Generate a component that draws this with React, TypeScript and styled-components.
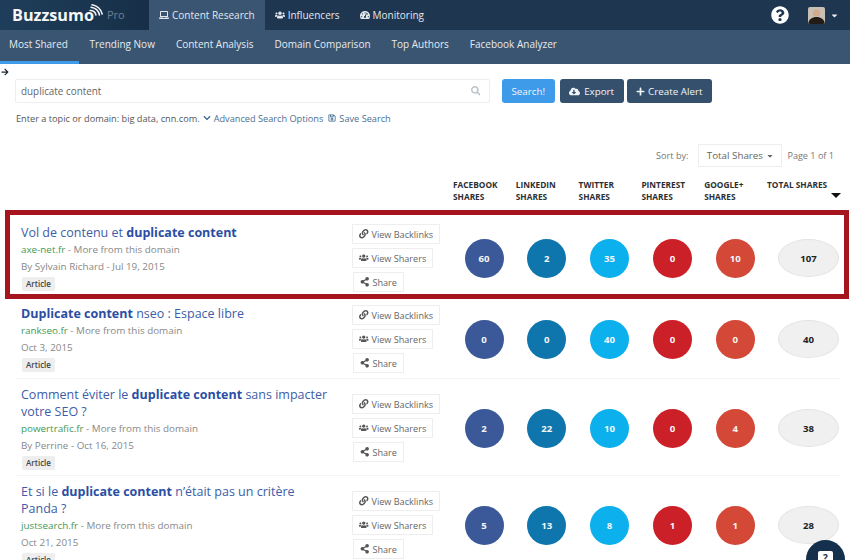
import React from "react";
import styled, { createGlobalStyle } from "styled-components";
import {
  FaLaptop, FaUsers, FaTachometerAlt, FaSearch, FaCloudDownloadAlt, FaPlus,
  FaChevronDown, FaRegSave, FaLink, FaShareAlt, FaCaretDown, FaArrowRight, FaQuestionCircle,
} from "react-icons/fa";

const Global = createGlobalStyle`
  html, body { margin: 0; padding: 0; background: #fff; }
  body { font-family: "Open Sans", "Liberation Sans", sans-serif; }
  * { box-sizing: border-box; }
`;

const Page = styled.div`
  position: relative;
  width: 850px;
  height: 560px;
  overflow: hidden;
  background: #fff;
`;

const TopBar = styled.header`
  display: flex;
  height: 30px;
  background: #1e3650;
  color: #fff;
`;
const LogoArea = styled.div`
  display: flex;
  align-items: center;
  width: 149px;
  padding-left: 12px;
  background: linear-gradient(90deg, #1f3e5b, #172f47);
`;
const LogoText = styled.span`
  font-size: 16.2px;
  font-weight: 700;
  color: #f6f7f8;
`;
const LogoMark = styled.svg`
  width: 14px;
  height: 16px;
  margin: -7px 0 0 -5px;
`;
const ProLabel = styled.span`
  margin-left: 4px;
  margin-top: -2px;
  font-size: 11px;
  color: #6f7f8f;
`;
const TopLink = styled.a<{ $active?: boolean }>`
  display: flex;
  align-items: center;
  gap: 3px;
  height: 30px;
  padding: 0 10px;
  font-size: 10px;
  color: #e3e8ed;
  background: ${(p) => (p.$active ? "#3a5572" : "transparent")};
  svg { font-size: 10px; }
`;
const TopRight = styled.div`
  display: flex;
  align-items: center;
  margin-left: auto;
  padding-right: 11px;
`;
const HelpIcon = styled(FaQuestionCircle)`
  font-size: 18px;
  color: #fff;
  margin-right: 19px;
`;
const Avatar = styled.svg`
  width: 17px;
  height: 17px;
  border-radius: 2px;
  margin-right: 5px;
`;
const AvatarCaret = styled(FaCaretDown)`
  font-size: 9px;
  color: #e8ecf0;
`;

const SubNav = styled.nav`
  display: flex;
  height: 34px;
  background: #3a5572;
`;
const SubLink = styled.a<{ $active?: boolean }>`
  display: flex;
  align-items: center;
  height: 34px;
  padding: 0 ${(p) => (p.$active ? "11px 3px 9px" : "10.5px 3px")};
  font-size: 10px;
  color: #e6ebf0;
  border-bottom: 3px solid ${(p) => (p.$active ? "#3d9bea" : "transparent")};
`;

const ArrowRow = styled.div`
  height: 15px;
  padding: 4px 0 0 1px;
  font-size: 8px;
  line-height: 8px;
  color: #1a2530;
`;
const SearchRow = styled.div`
  display: flex;
  align-items: stretch;
  height: 24px;
  margin-left: 15px;
`;
const SearchBox = styled.div`
  display: flex;
  align-items: center;
  justify-content: space-between;
  width: 475px;
  margin-right: 12px;
  padding: 0 9px 0 5px;
  border: 1px solid #eee;
  border-radius: 2px;
  font-size: 9.9px;
  color: #666;
  svg { font-size: 9.5px; color: #bcc2c7; }
`;
const ActionButton = styled.button<{ $primary?: boolean; $tight?: boolean }>`
  display: flex;
  align-items: center;
  gap: ${(p) => (p.$tight ? "3px" : "4px")};
  margin-right: ${(p) => (p.$primary ? "5px" : "3px")};
  padding: 0 9.5px;
  border: 0;
  border-radius: 3px;
  font-family: inherit;
  font-size: 9.8px;
  color: #f2f5f8;
  background: ${(p) => (p.$primary ? "#3d9bea" : "#34506d")};
  svg { font-size: ${(p) => (p.$tight ? "9px" : "11px")}; }
`;
const HelpRow = styled.div`
  display: flex;
  align-items: center;
  height: 14px;
  margin: 8px 0 0 16px;
  font-size: 9.2px;
  color: #555;
`;
const HelpLink = styled.span`
  display: inline-flex;
  align-items: center;
  gap: 3px;
  margin-left: 3px;
  margin-right: 2px;
  color: #4c6f92;
  svg { font-size: 8px; color: #34608c; }
`;
const SortRow = styled.div`
  display: flex;
  align-items: center;
  justify-content: flex-end;
  height: 23px;
  margin-top: 19px;
  padding-right: 16px;
  font-size: 9.1px;
  color: #777;
`;
const SortSelect = styled.div`
  display: flex;
  align-items: center;
  justify-content: center;
  gap: 3px;
  width: 84px;
  height: 23px;
  margin: 0 5px 0 10px;
  border: 1px solid #eee;
  font-size: 9.8px;
  color: #666;
  svg { font-size: 8px; }
`;

const ColumnHeads = styled.div`
  display: grid;
  grid-template-columns: repeat(5, 62.8px) 1fr;
  height: 38px;
  margin: 12px 0 0 453px;
`;
const Head = styled.div`
  position: relative;
  font-size: 8.3px;
  line-height: 12px;
  font-weight: 700;
  color: #2b2f33;
`;
const SortMark = styled.span`
  position: absolute;
  top: 14px;
  right: 9px;
  width: 0;
  height: 0;
  border-style: solid;
  border-width: 5px 5px 0;
  border-color: #111 transparent transparent;
`;

const Row = styled.article<{ $highlight?: boolean }>`
  position: relative;
  display: grid;
  grid-template-columns: 331px 101px repeat(5, 62.8px) 1fr;
  align-items: center;
  margin: 0 10px 0 16px;
  padding: 7px 0 5px 5px;
  border-bottom: 1px solid ${(p) => (p.$highlight ? "transparent" : "#f4f4f4")};
  ${(p) =>
    p.$highlight
      ? `&::after {
          content: "";
          position: absolute;
          top: -7px;
          bottom: -2px;
          left: -11px;
          right: -9px;
          border: 5px solid #a6141e;
          pointer-events: none;
        }`
      : ""}
`;
const Info = styled.div`
  align-self: start;
  padding-right: 22px;
`;
const Title = styled.h3`
  margin: 0;
  font-size: 12.5px;
  line-height: 17px;
  font-weight: 400;
  color: #3d5da8;
  b { font-weight: 700; color: #2a4ea3; }
`;
const Source = styled.div`
  font-size: 9.85px;
  line-height: 17px;
  color: #888;
  span { color: #3f9a58; }
`;
const Byline = styled.div`
  font-size: 9.85px;
  line-height: 16px;
  color: #888;
`;
const Badge = styled.div`
  width: fit-content;
  height: 14px;
  margin: 3px 0 0 1px;
  padding: 0 4px;
  border-radius: 2px;
  background: #eee;
  font-size: 8px;
  line-height: 14px;
  font-weight: 600;
  color: #444;
`;
const Actions = styled.div`
  display: flex;
  flex-direction: column;
  align-items: flex-start;
  gap: 4px;
`;
const SmallButton = styled.button<{ $indent?: boolean }>`
  display: flex;
  align-items: center;
  gap: 3px;
  height: 20px;
  margin-left: ${(p) => (p.$indent ? "1px" : "0")};
  padding: 0 6px;
  border: 1px solid #eee;
  background: #fff;
  font-family: inherit;
  font-size: 9.1px;
  color: #666;
  svg { font-size: 9.5px; color: #555; }
`;
const Circle = styled.div<{ $color: string }>`
  display: flex;
  align-items: center;
  justify-content: center;
  width: 39px;
  height: 39px;
  margin-left: 11.5px;
  border-radius: 50%;
  background: ${(p) => p.$color};
  font-size: 9.6px;
  font-weight: 700;
  color: #f4f6f8;
`;
const TotalOval = styled.div`
  display: flex;
  align-items: center;
  justify-content: center;
  width: 61px;
  height: 38px;
  margin-left: 11px;
  border: 1px solid #e4e4e4;
  border-radius: 50%;
  background: #f0f0f0;
  font-size: 9.6px;
  font-weight: 700;
  color: #222;
`;
const ChatBubble = styled.div`
  position: absolute;
  left: 806px;
  top: 540px;
  display: flex;
  justify-content: center;
  width: 39px;
  height: 39px;
  padding-top: 11px;
  border-radius: 50%;
  background: #15304d;
`;
const ChatGlyph = styled.span`
  width: 15px;
  height: 14px;
  border-radius: 2px;
  background: #fff;
  text-align: center;
  font-size: 10px;
  line-height: 14px;
  font-weight: 700;
  color: #1f3650;
`;

const colors = ["#3b5998", "#0e76ac", "#0cb0ec", "#cb2027", "#d34836"];

type Item = {
  title: React.ReactNode;
  domain: string;
  by: string;
  counts: number[];
  total: number;
  highlight?: boolean;
};

const items: Item[] = [
  {
    title: <>Vol de contenu et <b>duplicate content</b></>,
    domain: "axe-net.fr",
    by: "By Sylvain Richard - Jul 19, 2015",
    counts: [60, 2, 35, 0, 10],
    total: 107,
    highlight: true,
  },
  {
    title: <><b>Duplicate content</b> nseo : Espace libre</>,
    domain: "rankseo.fr",
    by: "Oct 3, 2015",
    counts: [0, 0, 40, 0, 0],
    total: 40,
  },
  {
    title: <>Comment éviter le <b>duplicate content</b> sans impacter votre SEO ?</>,
    domain: "powertrafic.fr",
    by: "By Perrine - Oct 16, 2015",
    counts: [2, 22, 10, 0, 4],
    total: 38,
  },
  {
    title: <>Et si le <b>duplicate content</b> n’était pas un critère Panda ?</>,
    domain: "justsearch.fr",
    by: "Oct 21, 2015",
    counts: [5, 13, 8, 1, 1],
    total: 28,
  },
];

const heads = [
  ["FACEBOOK", "SHARES"],
  ["LINKEDIN", "SHARES"],
  ["TWITTER", "SHARES"],
  ["PINTEREST", "SHARES"],
  ["GOOGLE+", "SHARES"],
];

export default function App() {
  return (
    <Page>
      <Global />
      <TopBar>
        <LogoArea>
          <LogoText>Buzzsumo</LogoText>
          <LogoMark viewBox="0 0 14 16" fill="none" stroke="#f2f4f6" strokeWidth="1.5" strokeLinecap="round">
            <path d="M1 6.5A6 6 0 0 1 7 11" />
            <path d="M2 3.2A10 10 0 0 1 10.5 11" />
            <path d="M3 .8A13 13 0 0 1 13.2 10" />
          </LogoMark>
          <ProLabel>Pro</ProLabel>
        </LogoArea>
        <TopLink $active><FaLaptop /> Content Research</TopLink>
        <TopLink><FaUsers /> Influencers</TopLink>
        <TopLink><FaTachometerAlt /> Monitoring</TopLink>
        <TopRight>
          <HelpIcon />
          <Avatar viewBox="0 0 17 17">
            <rect width="17" height="17" fill="#c9bfb4" />
            <circle cx="8.5" cy="6" r="3.6" fill="#d3a98c" />
            <path d="M0 17c1-5 4-7 8.5-7S16 12 17 17z" fill="#221c18" />
          </Avatar>
          <AvatarCaret />
        </TopRight>
      </TopBar>
      <SubNav>
        <SubLink $active>Most Shared</SubLink>
        <SubLink>Trending Now</SubLink>
        <SubLink>Content Analysis</SubLink>
        <SubLink>Domain Comparison</SubLink>
        <SubLink>Top Authors</SubLink>
        <SubLink>Facebook Analyzer</SubLink>
      </SubNav>
      <ArrowRow><FaArrowRight /></ArrowRow>
      <SearchRow>
        <SearchBox>duplicate content<FaSearch /></SearchBox>
        <ActionButton $primary>Search!</ActionButton>
        <ActionButton><FaCloudDownloadAlt /> Export</ActionButton>
        <ActionButton $tight><FaPlus /> Create Alert</ActionButton>
      </SearchRow>
      <HelpRow>
        Enter a topic or domain: big data, cnn.com.
        <HelpLink><FaChevronDown /> Advanced Search Options</HelpLink>
        <HelpLink><FaRegSave /> Save Search</HelpLink>
      </HelpRow>
      <SortRow>
        Sort by:
        <SortSelect>Total Shares <FaCaretDown /></SortSelect>
        Page 1 of 1
      </SortRow>
      <ColumnHeads>
        {heads.map(([a, b]) => (
          <Head key={a}>{a}<br />{b}</Head>
        ))}
        <Head>TOTAL SHARES<SortMark /></Head>
      </ColumnHeads>
      {items.map((it) => (
        <Row key={it.domain} $highlight={it.highlight}>
          <Info>
            <Title>{it.title}</Title>
            <Source><span>{it.domain}</span> - More from this domain</Source>
            <Byline>{it.by}</Byline>
            <Badge>Article</Badge>
          </Info>
          <Actions>
            <SmallButton><FaLink /> View Backlinks</SmallButton>
            <SmallButton><FaUsers /> View Sharers</SmallButton>
            <SmallButton $indent><FaShareAlt /> Share</SmallButton>
          </Actions>
          {it.counts.map((c, i) => (
            <Circle key={i} $color={colors[i]}>{c}</Circle>
          ))}
          <TotalOval>{it.total}</TotalOval>
        </Row>
      ))}
      <ChatBubble><ChatGlyph>?</ChatGlyph></ChatBubble>
    </Page>
  );
}
